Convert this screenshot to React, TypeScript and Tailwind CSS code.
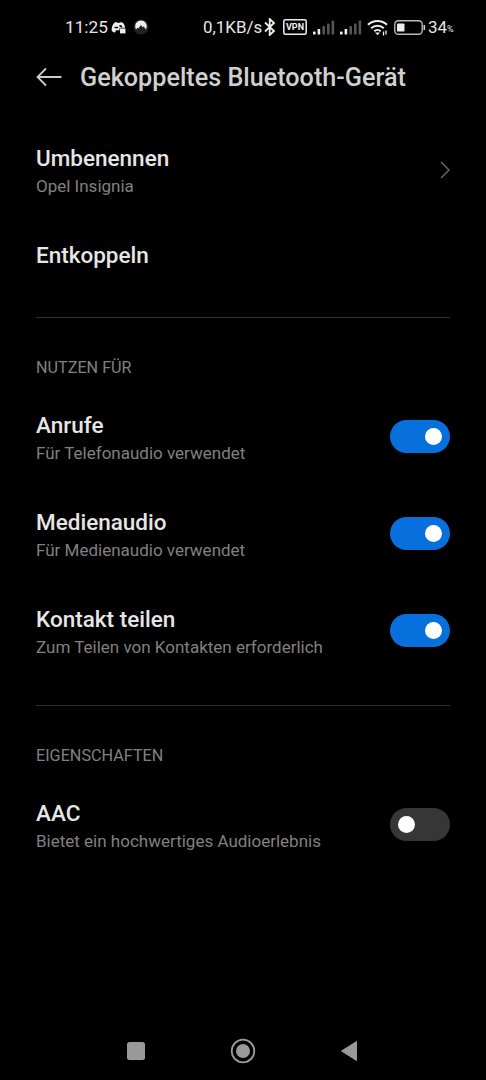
import { ReactNode, useState } from "react";

function Signal() {
  return (
    <svg width="22" height="15" viewBox="0 0 22 15" className="block">
      <rect x="0" y="11.500" width="2.600" height="3" rx=".6" fill="#eee" />
      <rect x="4.600" y="9" width="2.600" height="5.500" rx=".6" fill="#eee" />
      <rect x="9.400" y="6" width="2.600" height="8.500" rx=".6" fill="#555" />
      <rect x="14" y="3.500" width="2.600" height="11" rx=".6" fill="#555" />
      <rect x="18.600" y="0.500" width="2.600" height="14" rx=".6" fill="#555" />
    </svg>
  );
}

function StatusBar() {
  return (
    <div className="flex h-[54px] items-center pl-[65px] text-[17px] leading-none text-[#e6e6e6]">
      <span className="w-[46px] pt-px text-[17.200px]">11:25</span>
      <svg width="16" height="14" viewBox="0 0 16 14" className="mt-0.5 block">
        <path d="M3.600 1.600 5.500 1l.6.7h3L9.700 1l2.300.7c1.300 1.600 2 3.300 2 5H8.500v2.500H5L4 11.500C2.200 11.200 1 10.400.6 9.300.7 6 1.600 3.600 3.600 1.600Z" fill="#eee" />
        <path d="M4.200 6.500h2.200M9 4.800l1.500.6" stroke="#000" strokeWidth="1.600" strokeLinecap="round" />
        <path d="M9 7.500h5.500v4.900H9Z" fill="#eee" />
      </svg>
      <svg width="16" height="16" viewBox="0 0 16 16" className="ml-[6px] block">
        <circle cx="8" cy="8" r="7.600" fill="#222" />
        <path d="M3 10.500C.8 6 3.500 1.500 8 1.500s7.200 4.500 5 9L10.700 7.600 9.600 8.300 8 6 5.300 9.500l-.8-.7Z" fill="#eee" />
      </svg>
      <span className="ml-[54px] w-[61px] text-[16.900px] whitespace-nowrap">0,1KB/s</span>
      <svg width="12" height="18" viewBox="0 0 12 18" className="block" fill="none" stroke="#eee" strokeWidth="1.800">
        <path d="m1 4.500 9 8.500-4.300 4V1L10 5l-9 8.500" />
      </svg>
      <svg width="24" height="16" viewBox="0 0 24 16" className="ml-[7px] block">
        <rect x=".8" y=".8" width="22.400" height="14.400" rx="1.500" fill="none" stroke="#eee" strokeWidth="1.500" />
        <text x="12" y="11.300" textAnchor="middle" fontSize="9" fontWeight="700" fill="#eee">VPN</text>
      </svg>
      <div className="ml-1.5"><Signal /></div>
      <div className="ml-[5px]"><Signal /></div>
      <svg width="22" height="17" viewBox="0 0 22 17" className="ml-[5px] block" fill="none" stroke="#eee" strokeWidth="2">
        <path d="M1 5.800a13.500 13.500 0 0 1 19 0M4.200 9.200a9 9 0 0 1 12.600 0M7.300 12.300a4.700 4.700 0 0 1 6.400 0" />
        <path d="m8 13.500 2.500 2.700 2.500-2.700Z" fill="#eee" stroke="none" />
        <path d="M16.500 12.500v4M19 11.500v4" strokeWidth="1.300" />
      </svg>
      <svg width="32" height="15" viewBox="0 0 32 15" className="ml-[5px] block">
        <rect x=".8" y=".8" width="27.400" height="13.400" rx="3.500" fill="none" stroke="#bbb" strokeWidth="1.400" />
        <rect x="3" y="3.500" width="7.500" height="8" rx=".8" fill="#eee" />
        <path d="M30.300 5v5" stroke="#ccc" strokeWidth="1.600" />
      </svg>
      <span className="ml-[2px]">34</span>
      <span className="mt-[5px] text-[9px]">%</span>
    </div>
  );
}

function Row({ title, sub, children }: { title: string; sub: string; children: ReactNode }) {
  return (
    <div className="flex h-[97px] items-center justify-between">
      <div className="pt-[2px]">
        <div className="text-[22.500px] leading-[30px] font-medium text-[#e6e6e6]">{title}</div>
        <div className="text-[17px] leading-[26px] text-[#808080]">{sub}</div>
      </div>
      {children}
    </div>
  );
}

function Toggle({ initial, label }: { initial: boolean; label: string }) {
  const [on, setOn] = useState(initial);
  return (
    <button
      role="switch"
      aria-checked={on}
      aria-label={label}
      onClick={() => setOn(!on)}
      className={`flex h-[33px] w-[60px] items-center rounded-full px-2 ${on ? "justify-end bg-[#0870dc]" : "justify-start bg-[#363636]"}`}
    >
      <span className="size-[17px] rounded-full bg-white" />
    </button>
  );
}

function Heading({ children }: { children: ReactNode }) {
  return <h2 className="mt-[39px] h-[31px] text-[16.200px] leading-[22px] text-[#808080]">{children}</h2>;
}

export default function App() {
  return (
    <div className="flex h-[1080px] w-[486px] flex-col bg-black font-['Roboto',sans-serif]">
      <StatusBar />
      <header className="flex h-[48px] items-center pl-9">
        <svg width="26" height="20" viewBox="0 0 26 20" className="mb-0.5 block" fill="none" stroke="#ccc" strokeWidth="1.800">
          <path d="M25.500 10H1.500M10 1.500 1.500 10l8.500 8.500" />
        </svg>
        <h1 className="ml-[18px] text-[25.200px] leading-[30px] font-medium whitespace-nowrap text-[#d0d0d0]">Gekoppeltes Bluetooth-Gerät</h1>
      </header>
      <main className="flex flex-1 flex-col px-9 pt-[19px]">
        <Row title="Umbenennen" sub="Opel Insignia">
          <svg width="10" height="18" viewBox="0 0 10 18" className="block" fill="none" stroke="#666" strokeWidth="1.500">
            <path d="m1 1 8 8-8 8" />
          </svg>
        </Row>
        <div className="flex h-[74px] items-center pb-px text-[22.500px] leading-[30px] font-medium text-[#e6e6e6]">Entkoppeln</div>
        <hr className="mt-[25px] border-[#303030]" />
        <Heading>NUTZEN FÜR</Heading>
        <Row title="Anrufe" sub="Für Telefonaudio verwendet"><Toggle initial label="Anrufe" /></Row>
        <Row title="Medienaudio" sub="Für Medienaudio verwendet"><Toggle initial label="Medienaudio" /></Row>
        <Row title="Kontakt teilen" sub="Zum Teilen von Kontakten erforderlich"><Toggle initial label="Kontakt teilen" /></Row>
        <hr className="mt-[26px] border-[#303030]" />
        <Heading>EIGENSCHAFTEN</Heading>
        <Row title="AAC" sub="Bietet ein hochwertiges Audioerlebnis"><Toggle initial={false} label="AAC" /></Row>
      </main>
      <nav className="flex h-[59px] items-center pl-[127px]">
        <svg width="18" height="18" viewBox="0 0 18 18" className="block"><rect width="18" height="18" rx="2.500" fill="#999" /></svg>
        <svg width="26" height="26" viewBox="0 0 26 26" className="ml-[85px] block">
          <circle cx="13" cy="13" r="11.300" fill="none" stroke="#999" strokeWidth="1.800" />
          <circle cx="13" cy="13" r="7" fill="#999" />
        </svg>
        <svg width="18" height="22" viewBox="0 0 18 22" className="ml-[84px] block">
          <path d="M16.500 1.500v19L1.500 11Z" fill="#999" stroke="#999" strokeLinejoin="round" />
        </svg>
      </nav>
    </div>
  );
}
